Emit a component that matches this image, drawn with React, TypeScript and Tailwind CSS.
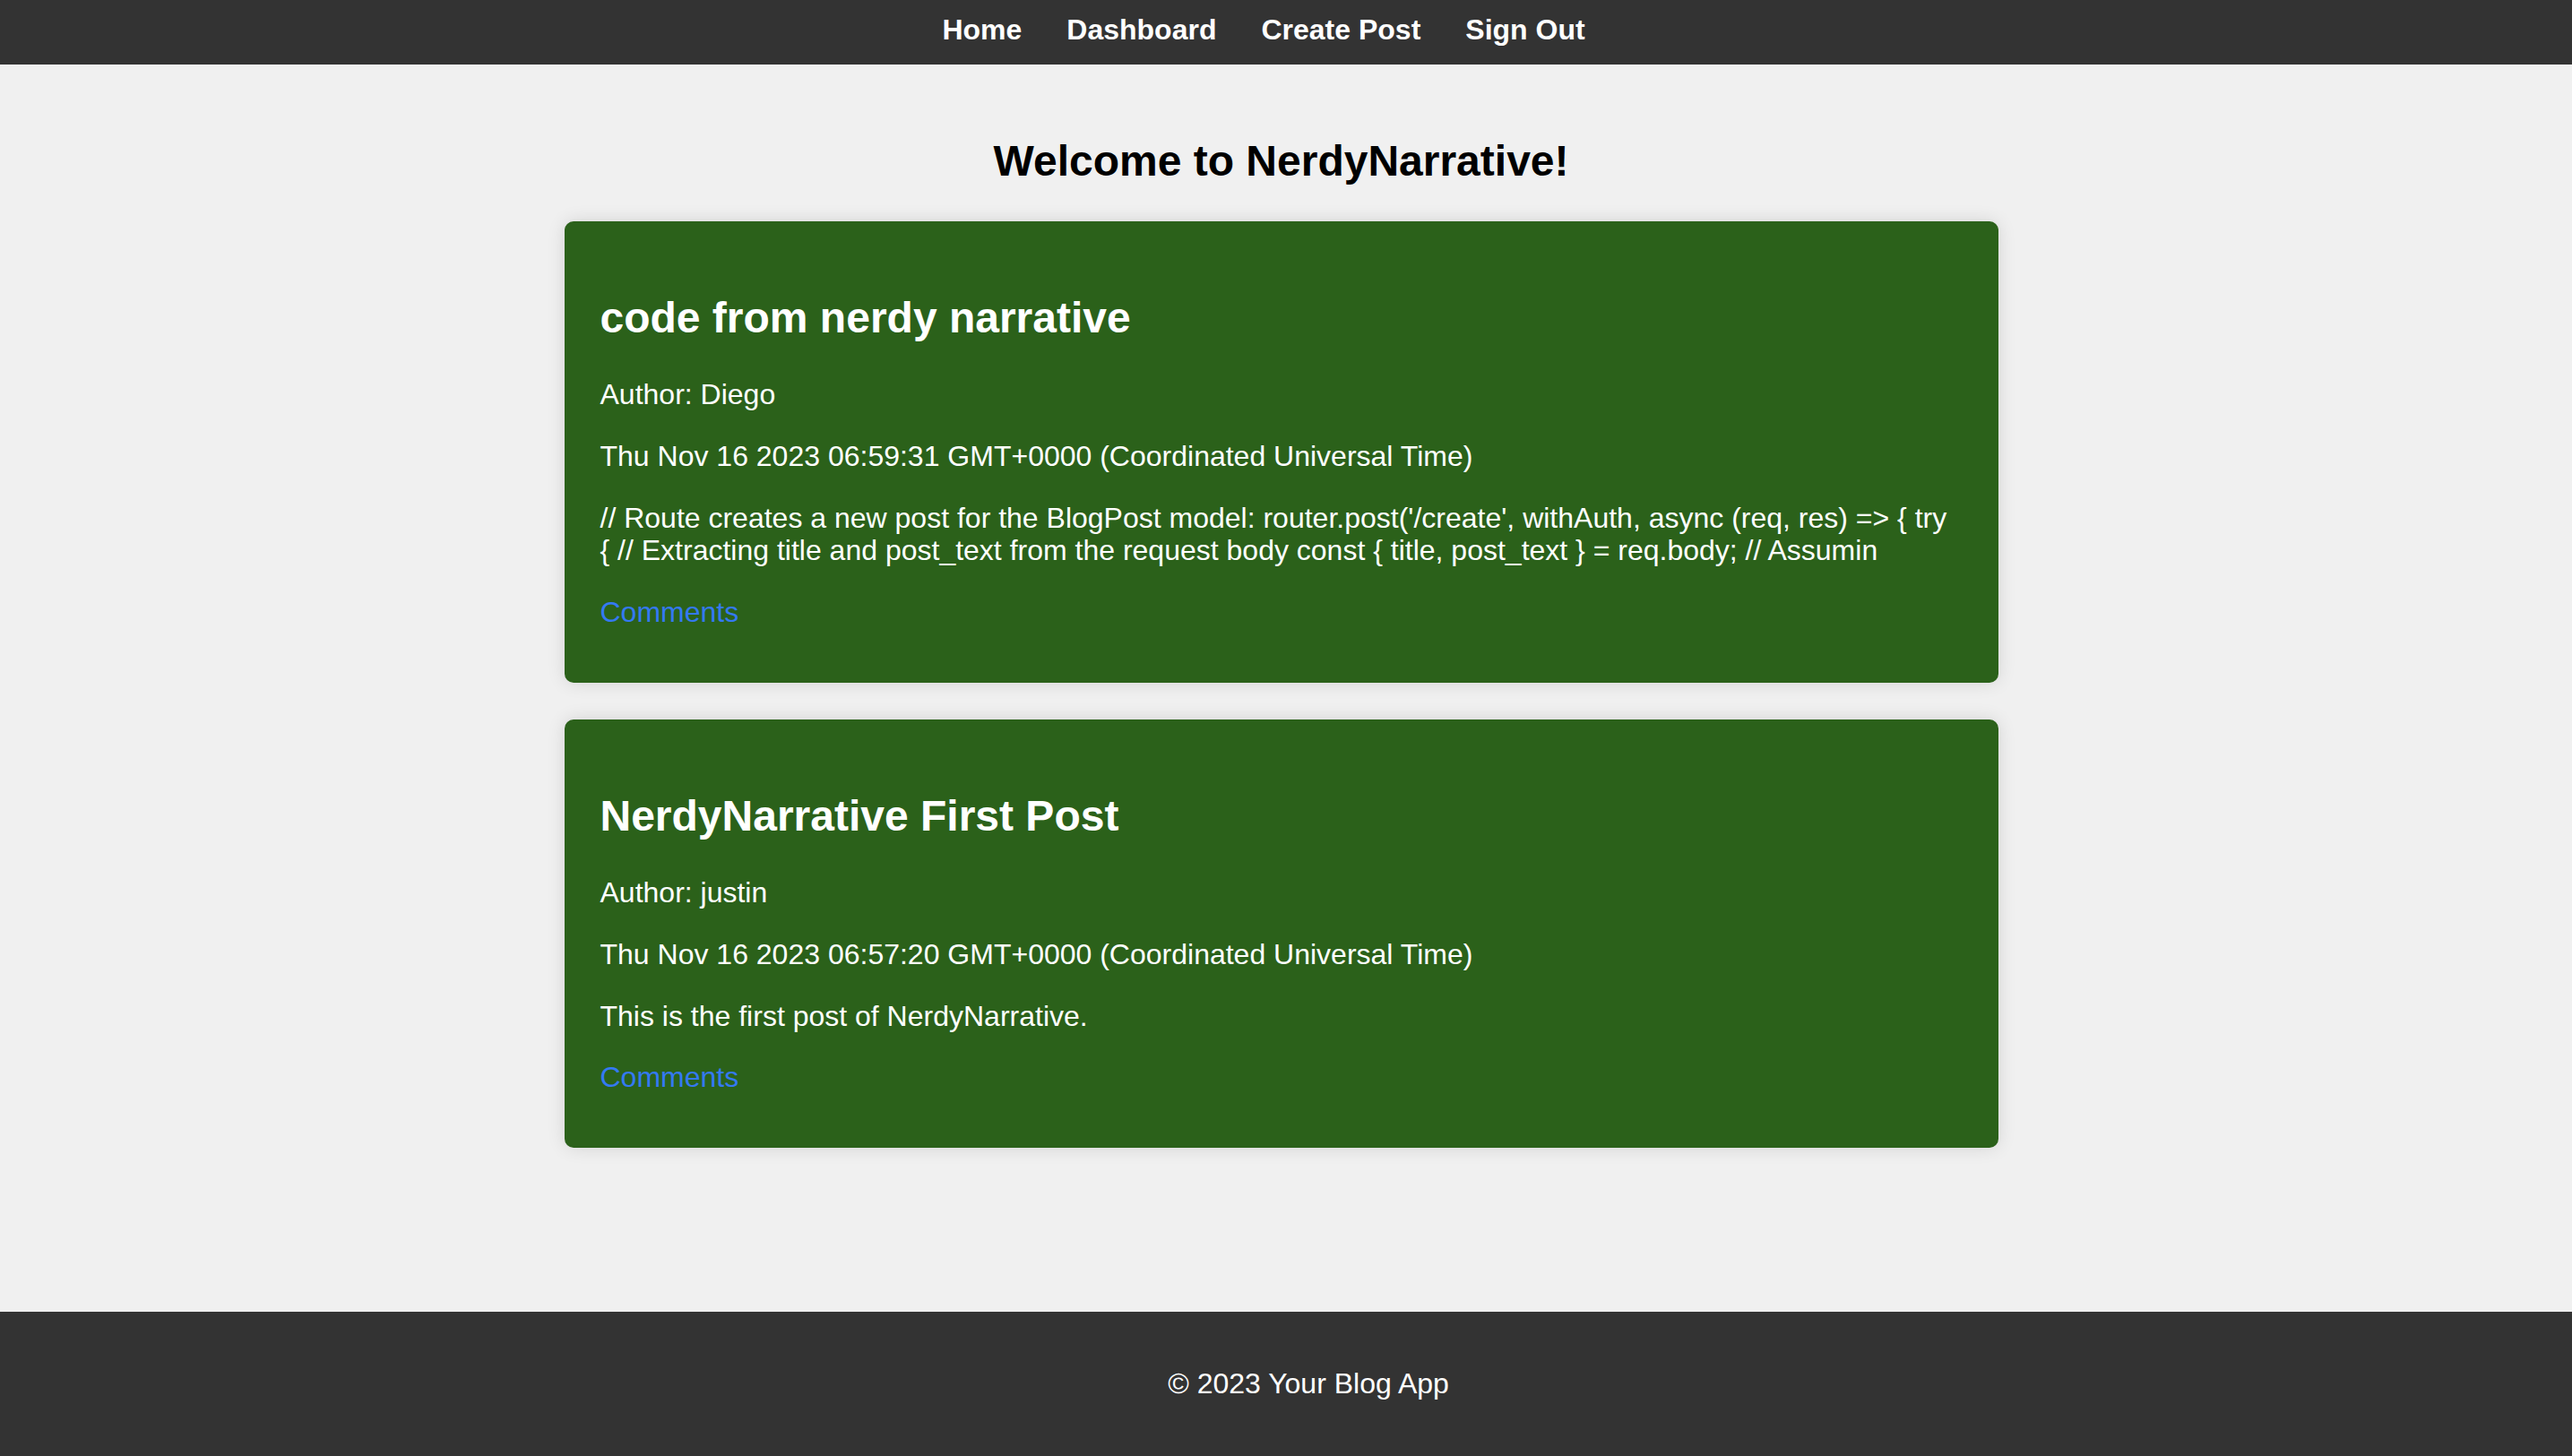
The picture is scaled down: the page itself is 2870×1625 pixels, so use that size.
import React from "react";

const posts = [
  {
    title: "code from nerdy narrative",
    author: "Diego",
    date: "Thu Nov 16 2023 06:59:31 GMT+0000 (Coordinated Universal Time)",
    body:
      "// Route creates a new post for the BlogPost model: router.post('/create', withAuth, async (req, res) => { try { // Extracting title and post_text from the request body const { title, post_text } = req.body; // Assumin",
  },
  {
    title: "NerdyNarrative First Post",
    author: "justin",
    date: "Thu Nov 16 2023 06:57:20 GMT+0000 (Coordinated Universal Time)",
    body: "This is the first post of NerdyNarrative.",
  },
];

export default function App() {
  return (
    <div className="min-h-screen flex flex-col bg-[#f0f0f0] font-['Liberation_Sans',Arial,Helvetica,sans-serif] text-[32px] leading-[36.8px]">
      <nav className="h-[72px] bg-[#333333] flex justify-center items-start pt-[15px]">
        {["Home", "Dashboard", "Create Post", "Sign Out"].map((l) => (
          <a key={l} href="#" className="mr-[50px] text-white font-bold">
            {l}
          </a>
        ))}
      </nav>

      <main className="flex-1 flex flex-col items-center pt-[40px] pr-[11px]">
        <h2 className="mt-[40px] mb-[40px] text-[48px] leading-[55px] font-bold text-black text-center">
          Welcome to NerdyNarrative!
        </h2>
        <div className="flex flex-col gap-[41px]">
          {posts.map((p) => (
            <div
              key={p.title}
              className="w-[1600px] bg-[#2b611a] rounded-[10px] shadow-[0_0_20px_rgba(0,0,0,0.12)] pt-[80px] pb-[60px] pl-[40px] pr-[48px] text-white"
            >
              <h2 className="text-[48px] leading-[55px] font-bold">{p.title}</h2>
              <div className="mt-[40px] flex flex-col gap-[32px]">
                <p>Author: {p.author}</p>
                <p>{p.date}</p>
                <p>{p.body}</p>
                <p>
                  <a href="#" className="text-[#3479f3]">
                    Comments
                  </a>
                </p>
              </div>
            </div>
          ))}
        </div>
      </main>

      <footer className="h-[161px] bg-[#333333] flex items-center justify-center pl-[50px] text-white">
        <p>© 2023 Your Blog App</p>
      </footer>
    </div>
  );
}
